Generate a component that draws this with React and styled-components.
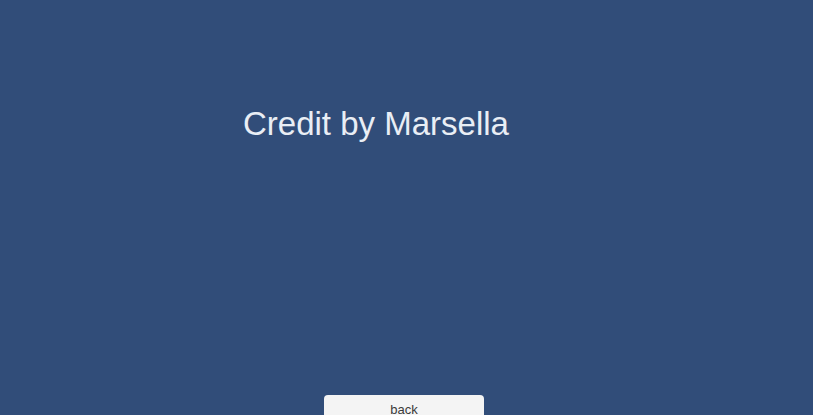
import React from 'react';
import styled, { createGlobalStyle } from 'styled-components';

const Global = createGlobalStyle`
  html, body {
    margin: 0;
    padding: 0;
    background: #314d79;
  }
`;

const Screen = styled.div`
  width: 813px;
  height: 415px;
  overflow: hidden;
  background: #314d79;
  display: flex;
  flex-direction: column;
  font-family: "Liberation Sans", Arial, sans-serif;
`;

const Title = styled.h1`
  margin: 0;
  padding: 104px 0 0 243px;
  font-size: 33px;
  font-weight: normal;
  line-height: 40px;
  color: #e9eef5;
`;

const Footer = styled.div`
  margin-top: auto;
  padding-left: 324px;
  height: 20px;
`;

const Button = styled.button`
  width: 160px;
  height: 30px;
  border: none;
  border-radius: 4px 4px 0 0;
  background: #f4f4f4;
  color: #3a3a3a;
  font-family: "Liberation Sans", Arial, sans-serif;
  font-size: 13px;
  padding: 7px 0 0;
  display: flex;
  justify-content: center;
  align-items: flex-start;
`;

export default function App() {
  return (
    <Screen>
      <Global />
      <Title>Credit by Marsella</Title>
      <Footer>
        <Button>back</Button>
      </Footer>
    </Screen>
  );
}
